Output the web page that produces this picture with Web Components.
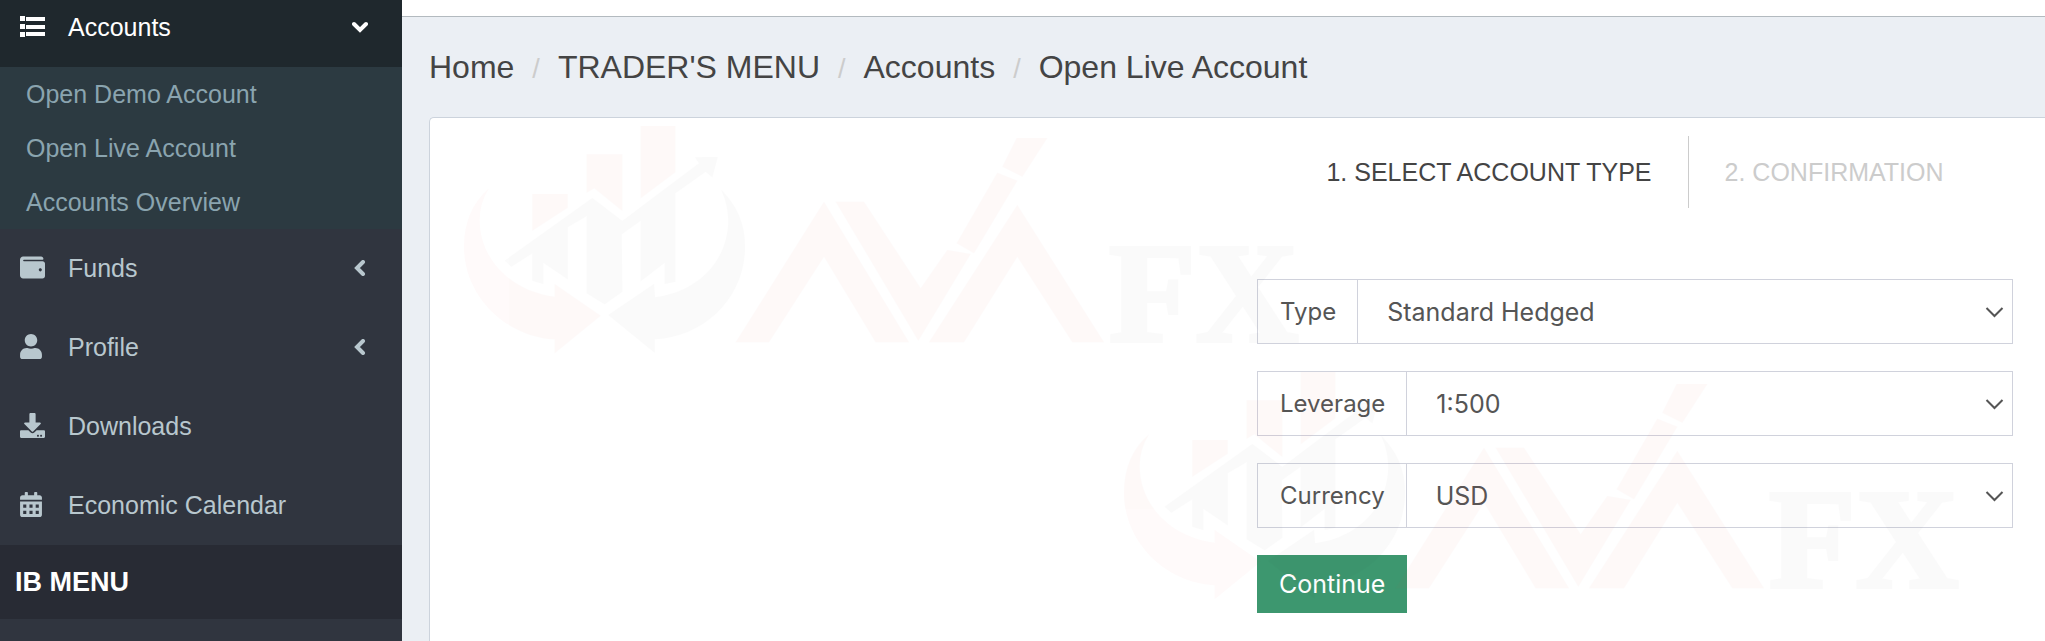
<!DOCTYPE html>
<html lang="en">
<head>
<meta charset="utf-8">
<title>Open Live Account</title>
<style>
  body {
    margin: 0;
    font-family: "Liberation Sans", Arial, sans-serif;
    font-size: 25px;
    line-height: 30px;
    color: #444;
  }
</style>
</head>
<body>

<template id="pageTemplate">
  <style>
    :host {
      display: grid;
      grid-template-columns: 402px minmax(0, 1fr);
      min-height: 100vh;
      background: #ebeff4;
    }
    aside {
      background: #30353f;
      overflow: hidden;
    }
    main {
      display: flex;
      flex-direction: column;
    }
    .topbar {
      height: 16px;
      background: white;
      border-bottom: 1px solid #b3babf;
    }
    .content {
      flex: 1;
      display: flex;
      flex-direction: column;
      padding-left: 27px;
    }
  </style>
  <aside><slot name="sidebar"></slot></aside>
  <main>
    <div class="topbar"></div>
    <div class="content"><slot></slot></div>
  </main>
</template>

<template id="menuTemplate">
  <style>
    /* the list is scrolled a little under the top edge */
    :host {
      display: block;
      margin-top: -12px;
    }
  </style>
  <nav><slot></slot></nav>
</template>

<template id="itemTemplate">
  <style>
    :host {
      display: block;
    }
    a {
      display: flex;
      align-items: center;
      height: 77px;
      padding: 0 34px 2px 20px;
      color: #b8c7ce;
      text-decoration: none;
    }
    :host([open]) a {
      background: #1f282d;
      color: white;
    }
    .icon {
      display: flex;
      width: 48px;
    }
    .text {
      flex: 1;
    }
    .submenu {
      background: #2c3a41;
    }
    .state {
      display: flex;
    }
    svg {
      fill: currentColor;
    }
    .arrow {
      fill: none;
      stroke: currentColor;
      stroke-width: 4;
      stroke-linecap: round;
      stroke-linejoin: miter;
    }
  </style>
  <a href="#">
    <span class="icon"></span>
    <span class="text"><slot></slot></span>
    <span class="state"></span>
  </a>
  <div class="submenu"><slot name="sub"></slot></div>
</template>

<template id="subItemTemplate">
  <style>
    :host {
      display: block;
    }
    a {
      display: block;
      padding: 12px 26px;
      color: #8aa4af;
      text-decoration: none;
    }
  </style>
  <a href="#"><slot></slot></a>
</template>

<template id="menuHeaderTemplate">
  <style>
    :host {
      display: flex;
      align-items: center;
      height: 74px;
      padding: 0 15px;
      background: #282b34;
      color: white;
      font-size: 27px;
      font-weight: bold;
    }
  </style>
  <slot></slot>
</template>

<template id="crumbsTemplate">
  <style>
    :host {
      display: block;
      padding: 32px 0;
      font-size: 32px;
      line-height: 36px;
    }
    nav {
      display: flex;
      align-items: baseline;
      gap: 18px;
    }
    ::slotted(a) {
      color: #444;
      text-decoration: none;
    }
    ::slotted(span) {
      color: #ccc;
      font-size: 27px;
      line-height: 30px;
    }
  </style>
  <nav aria-label="Breadcrumb"><slot></slot></nav>
</template>

<template id="cardTemplate">
  <style>
    :host {
      position: relative;
      flex: 1;
      display: flex;
      justify-content: flex-end;
      padding: 18px 32px 0;
      background: white;
      border: 1px solid #ccd3dc;
      border-width: 1px 0 0 1px;
      border-top-left-radius: 5px;
    }
    .body {
      width: 100%;
      max-width: 756px;
    }
  </style>
  <div class="body"><slot></slot></div>
  <slot name="watermark"></slot>
</template>

<template id="stepsTemplate">
  <style>
    :host {
      display: flex;
      justify-content: center;
      margin-bottom: 71px;
      line-height: 72px;
    }
    ::slotted(span) {
      padding: 0 36px;
      color: #ccc;
    }
    ::slotted(span[current]) {
      border-right: 1px solid #ccc;
      color: #444;
    }
  </style>
  <slot></slot>
</template>

<template id="fieldTemplate">
  <style>
    :host {
      display: flex;
      height: 63px;
      margin-bottom: 27px;
      border: 1px solid #d0d2dc;
      font-family: Inter, sans-serif;
      font-size: 24px;
      color: #555;
    }
    label {
      display: flex;
      align-items: center;
      padding: 0 21px 0 22px;
      border-right: 1px solid #d0d2dc;
    }
    .control {
      flex: 1;
      display: grid;
      align-items: center;
      justify-items: end;
    }
    select, svg {
      grid-area: 1 / 1;
    }
    select {
      width: 100%;
      height: 100%;
      padding: 0 50px 0 29px;
      appearance: none;
      border: none;
      background: none;
      color: inherit;
      font: inherit;
      font-size: 25px;
    }
    svg {
      margin-right: 8px;
      fill: none;
      stroke: #555;
      stroke-width: 2;
      pointer-events: none;
    }
  </style>
  <label for="control"><slot></slot></label>
  <div class="control">
    <select id="control"></select>
    <svg width="19" height="12" viewBox="0 0 19 12"><path d="M1.5 2L9.5 10L17.5 2"/></svg>
  </div>
</template>

<template id="buttonTemplate">
  <style>
    :host {
      display: block;
    }
    button {
      height: 58px;
      padding: 0 22px;
      border: none;
      background: #3d976f;
      color: white;
      font: 25px/30px Inter, sans-serif;
    }
  </style>
  <button type="button"><slot></slot></button>
</template>

<template id="watermarkTemplate">
  <style>
    :host {
      position: absolute;
      inset: 0;
      overflow: hidden;
      pointer-events: none;
    }
    svg {
      position: absolute;
      left: 29px;
      top: 4px;
    }
    svg + svg {
      left: 689px;
      top: 250px;
    }
    .red {
      fill: #f0503c;
      opacity: 0.027;
    }
    .grey {
      fill: #333;
      opacity: 0.021;
    }
    text {
      font-family: "Liberation Serif", serif;
      font-size: 426px;
      font-weight: bold;
      stroke: #333;
      stroke-width: 12;
    }
  </style>
  <svg width="860" height="260" viewBox="60 36 2580 780" aria-hidden="true">
    <g class="red">
      <path d="M280 252H386V293L280 362Z"/>
      <path d="M443 133H550V303L466 235L443 248Z"/>
      <path d="M605 48H709V187L605 265Z"/>
      <path d="M150 235Q75 300 75 410C75 560 200 680 347 688V730L485 617L347 522V560C220 545 122 450 122 330Q122 280 150 235Z"/>
      <path d="M890 697L1155 275L1410 697H1310L1155 440L990 697Z"/>
      <path d="M1190 275H1275L1445 535L1525 420L1595 432L1438 692Z"/>
      <path d="M1553 400L1675 188L1735 212L1605 430Z"/>
      <path d="M1690 170L1733 84H1825L1750 200Z"/>
      <path d="M1470 697L1735 285L1995 697H1900L1735 440L1575 697Z"/>
    </g>
    <g class="grey">
      <path d="M197 452L460 264L550 333L780 160L768 142L836 141L820 202L800 185L709 250V515L677 522V458L605 514V332L548 373L550 545L497 583L443 550V318L386 352V508L313 458V522L280 512V430L217 470Z"/>
      <path d="M847 240Q918 310 918 410C918 560 800 680 647 688V728L508 615L645 522L648 562C780 545 868 450 868 330Q866 280 847 240Z"/>
      <text x="2010" y="694">FX</text>
    </g>
  </svg>
</template>

<trading-page>
  <side-menu slot="sidebar">
    <side-item icon="list" arrow="down" open>Accounts
      <side-subitem slot="sub">Open Demo Account</side-subitem>
      <side-subitem slot="sub">Open Live Account</side-subitem>
      <side-subitem slot="sub">Accounts Overview</side-subitem>
    </side-item>
    <side-item icon="wallet" arrow="left">Funds</side-item>
    <side-item icon="user" arrow="left">Profile</side-item>
    <side-item icon="download">Downloads</side-item>
    <side-item icon="calendar">Economic Calendar</side-item>
    <side-header>IB MENU</side-header>
  </side-menu>

  <bread-crumbs>
    <a href="#">Home</a>
    <span>/</span>
    <a href="#">TRADER'S MENU</a>
    <span>/</span>
    <a href="#">Accounts</a>
    <span>/</span>
    <a href="#">Open Live Account</a>
  </bread-crumbs>

  <content-card>
    <wizard-steps>
      <span current>1. SELECT ACCOUNT TYPE</span>
      <span>2. CONFIRMATION</span>
    </wizard-steps>
    <select-field options="Standard Hedged">Type</select-field>
    <select-field options="1:500">Leverage</select-field>
    <select-field options="USD">Currency</select-field>
    <action-button>Continue</action-button>
    <brand-watermark slot="watermark"></brand-watermark>
  </content-card>
</trading-page>

<script>
  (() => {
    const icons = {
      list: `<svg width="25" height="21" viewBox="0 0 25 21"><path d="M0 0h5v5H0zM0 8h5v5H0zM0 16h5v5H0zM6 1h19v4H6zM6 9h19v4H6zM6 16h19v4H6z"/></svg>`,
      wallet: `<svg width="25" height="25" viewBox="0 0 512 512"><path d="M461.2 128H80c-8.84 0-16-7.16-16-16s7.16-16 16-16h384c8.84 0 16-7.16 16-16 0-26.51-21.49-48-48-48H64C28.65 32 0 60.65 0 96v320c0 35.35 28.65 64 64 64h397.2c28.02 0 50.8-21.53 50.8-48V176c0-26.47-22.78-48-50.8-48zM416 336c-17.67 0-32-14.33-32-32s14.33-32 32-32 32 14.33 32 32-14.33 32-32 32z"/></svg>`,
      user: `<svg width="22" height="25" viewBox="0 0 448 512"><path d="M224 256c70.7 0 128-57.3 128-128S294.7 0 224 0 96 57.3 96 128s57.3 128 128 128zm89.6 32h-16.7c-22.2 10.2-46.9 16-72.9 16s-50.6-5.8-72.9-16h-16.7C60.2 288 0 348.2 0 422.4V464c0 26.5 21.5 48 48 48h352c26.5 0 48-21.5 48-48v-41.6c0-74.2-60.2-134.4-134.4-134.4z"/></svg>`,
      download: `<svg width="25" height="25" viewBox="0 0 512 512"><path d="M216 0h80c13.3 0 24 10.7 24 24v168h87.7c17.8 0 26.7 21.5 14.1 34.1L269.7 378.3c-7.5 7.5-19.8 7.5-27.3 0L90.1 226.1c-12.6-12.6-3.7-34.1 14.1-34.1H192V24c0-13.3 10.7-24 24-24zm296 376v112c0 13.3-10.7 24-24 24H24c-13.3 0-24-10.7-24-24V376c0-13.3 10.7-24 24-24h146.7l49 49c20.1 20.1 52.5 20.1 72.6 0l49-49H488c13.3 0 24 10.7 24 24zm-124 88c0-11-9-20-20-20s-20 9-20 20 9 20 20 20 20-9 20-20zm64 0c0-11-9-20-20-20s-20 9-20 20 9 20 20 20 20-9 20-20z"/></svg>`,
      calendar: `<svg width="22" height="25" viewBox="0 0 448 512"><path fill-rule="evenodd" d="M0 464c0 26.5 21.5 48 48 48h352c26.5 0 48-21.5 48-48V192H0zM64 256h64v64H64zM192 256h64v64h-64zM320 256h64v64h-64zM64 384h64v64H64zM192 384h64v64h-64zM320 384h64v64h-64zM400 64h-48V16c0-8.8-7.2-16-16-16h-32c-8.8 0-16 7.2-16 16v48H160V16c0-8.8-7.2-16-16-16h-32c-8.8 0-16 7.2-16 16v48H48C21.5 64 0 85.5 0 112v48h448v-48c0-26.5-21.5-48-48-48z"/></svg>`,
    };

    const arrows = {
      down: `<svg class="arrow" width="16" height="16" viewBox="0 0 16 16"><path d="M2 5L8 11L14 5"/></svg>`,
      left: `<svg class="arrow" width="16" height="16" viewBox="0 0 16 16"><path d="M11 2L5 8L11 14"/></svg>`,
    };

    class TemplateElement extends HTMLElement {
      constructor() {
        super();
        let template = document.querySelector("#" + this.constructor.template);
        this.root = this.attachShadow({mode: "open"});
        this.root.appendChild(template.content.cloneNode(true));
      }
    }

    customElements.define("trading-page", class extends TemplateElement {
      static template = "pageTemplate";
    });

    customElements.define("side-menu", class extends TemplateElement {
      static template = "menuTemplate";
    });

    customElements.define("side-item", class extends TemplateElement {
      static template = "itemTemplate";

      connectedCallback() {
        this.root.querySelector(".icon").innerHTML = icons[this.getAttribute("icon")];
        this.root.querySelector(".state").innerHTML = arrows[this.getAttribute("arrow")] || "";
      }
    });

    customElements.define("side-subitem", class extends TemplateElement {
      static template = "subItemTemplate";
    });

    customElements.define("side-header", class extends TemplateElement {
      static template = "menuHeaderTemplate";
    });

    customElements.define("bread-crumbs", class extends TemplateElement {
      static template = "crumbsTemplate";
    });

    customElements.define("content-card", class extends TemplateElement {
      static template = "cardTemplate";
    });

    customElements.define("wizard-steps", class extends TemplateElement {
      static template = "stepsTemplate";
    });

    customElements.define("select-field", class extends TemplateElement {
      static template = "fieldTemplate";

      connectedCallback() {
        let select = this.root.querySelector("select");
        this.getAttribute("options").split(",").forEach(name => {
          select.add(new Option(name));
        });
      }
    });

    customElements.define("action-button", class extends TemplateElement {
      static template = "buttonTemplate";
    });

    // the logo is drawn twice, the second one lower and to the right
    customElements.define("brand-watermark", class extends TemplateElement {
      static template = "watermarkTemplate";

      connectedCallback() {
        this.root.appendChild(this.root.querySelector("svg").cloneNode(true));
      }
    });
  })();
</script>
</body>
</html>
